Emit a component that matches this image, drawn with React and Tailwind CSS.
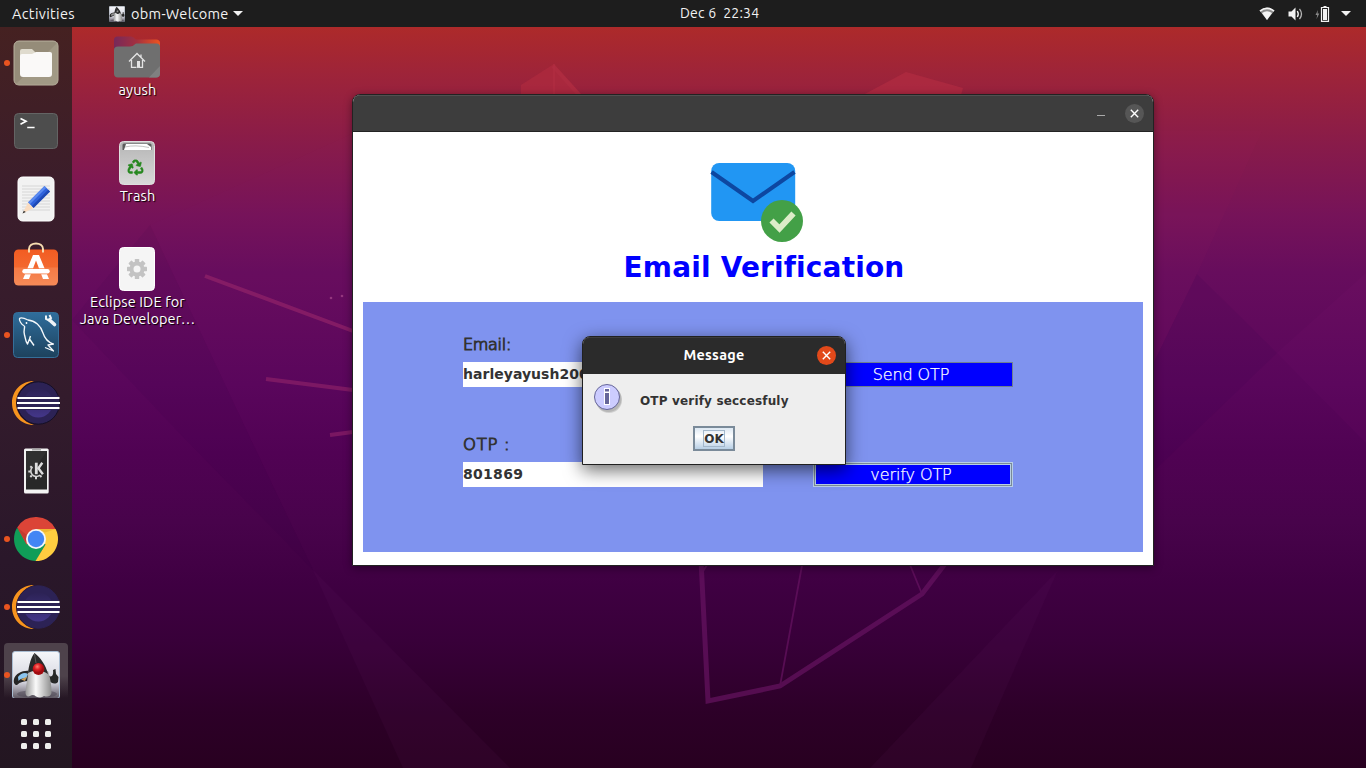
import React from "react";
import { FaRecycle } from "react-icons/fa";

const UI = "font-['Ubuntu','Noto_Sans',sans-serif]";

function Wallpaper() {
  return (
    <svg className="absolute inset-0 h-full w-full" viewBox="0 0 1366 768" aria-hidden="true">
      <defs>
        <linearGradient id="sky" x1="0" y1="0" x2="0" y2="1">
          <stop offset="0.035" stopColor="#ad2a2a" />
          <stop offset="0.096" stopColor="#9e2439" />
          <stop offset="0.19" stopColor="#881b4a" />
          <stop offset="0.28" stopColor="#761359" />
          <stop offset="0.355" stopColor="#670d5d" />
          <stop offset="0.5" stopColor="#59065b" />
          <stop offset="0.59" stopColor="#500253" />
          <stop offset="0.68" stopColor="#48034b" />
          <stop offset="0.76" stopColor="#3f0042" />
          <stop offset="0.835" stopColor="#380039" />
          <stop offset="0.927" stopColor="#2d0028" />
          <stop offset="1" stopColor="#280020" />
        </linearGradient>
      </defs>
      <rect width="1366" height="768" fill="url(#sky)" />
      <path d="M150 225 L251 440 L313 570 L186 440 L72 320Z" fill="#20004a" opacity="0.06" />
      <path d="M150 225 L360 130 V570 H313 L251 440Z" fill="#a02080" opacity="0.02" />
      <path d="M313 570 L403 768 H510Z" fill="#6a2070" opacity="0.09" />
      <path d="M1058 570 L870 768 H971Z" fill="#6a2070" opacity="0.09" />
      <path d="M1262 131 L1197 274 L1154 362 V131Z" fill="#b03060" opacity="0.05" />
      <path d="M1197 274 L1277 353 L1154 471 V362Z" fill="#28004a" opacity="0.09" />
      <path d="M1366 273 L1277 353 L1366 443Z" fill="#a02080" opacity="0.06" />
      <path d="M521 85 L554 64 L582 95 H521Z" fill="#b22c40" opacity="0.6" />
      <path d="M554 64 V95" stroke="#b63045" strokeWidth="1.5" opacity="0.6" />
      <path d="M553 66 L580 96" stroke="#b22e43" strokeWidth="4" opacity="0.5" />
      <path d="M863 95 L906 72 L963 88 L961 95Z" fill="#b52d43" opacity="0.6" />
      <g fill="none" stroke="#8f2268">
        <path d="M205 276 L353 331" strokeWidth="4" opacity="0.75" />
        <path d="M266 379 L353 390" strokeWidth="4" opacity="0.65" />
        <path d="M330 435 L353 432" strokeWidth="4" opacity="0.65" />
      </g>
      <g fill="#a84a8c" opacity="0.7">
        <circle cx="331" cy="298" r="1.3" />
        <circle cx="342" cy="296" r="1.3" />
      </g>
      <g fill="none" stroke="#6a1464" opacity="0.65">
        <path d="M701 560 L708 701 L780 686 L922 594 L948 560" strokeWidth="5" />
        <path d="M803 560 L780 686 M908 560 L922 594" strokeWidth="1.8" />
        <path d="M703 571 L709 562" strokeWidth="2" />
      </g>
    </svg>
  );
}

function FilesIcon() {
  return (
    <svg className="size-12" viewBox="0 0 48 48">
      <rect x="2" y="2" width="44" height="44" rx="5" fill="#958c79" stroke="#b9b19f" />
      <path d="M46 3 V42 Q46 46 42 46 H3Z" fill="#aaa28d" opacity="0.6" />
      <path d="M8 14 V12 Q8 10 10 10 H20 L24 14 H38 Q40 14 40 16 V25 H8Z" fill="#dfdbce" />
      <path d="M8 17 Q8 15 10 15 H20 L24 13 H38 Q40 13 40 15 V35 Q40 38 37 38 H11 Q8 38 8 35Z" fill="#faf9f8" />
    </svg>
  );
}

function TerminalIcon() {
  return (
    <svg className="size-12" viewBox="0 0 48 48">
      <rect x="2.5" y="6.5" width="43" height="35" rx="4" fill="#4d4d4d" stroke="#646464" />
      <path d="M8.5 11.5 L14 14.3 L8.5 17.2" fill="none" stroke="#fff" strokeWidth="1.7" />
      <path d="M15.2 20.5 H22.6" stroke="#fff" strokeWidth="1.5" />
    </svg>
  );
}

function EditorIcon() {
  return (
    <svg className="size-12" viewBox="0 0 48 48">
      <rect x="6" y="2" width="36" height="44" rx="4.5" fill="#f2f2f2" stroke="#fff" />
      <path d="M10 11 H38 M10 14 H38 M10 17 H38 M10 20 H38 M10 23 H38 M10 26 H38 M10 29 H38 M10 32 H38 M10 35 H38" stroke="#cfcfcf" strokeWidth="0.8" />
      <path d="M16 27.5 L32.5 11 L38 16.5 L21.5 33Z" fill="#2f62dc" />
      <path d="M16 27.5 L32.5 11 L34.3 12.8 L17.8 29.3Z" fill="#5b8bf0" />
      <path d="M19.7 31.2 L36.2 14.7 L38 16.5 L21.5 33Z" fill="#1e49b4" />
      <path d="M16 27.5 L21.5 33 L10.5 38.5Z" fill="#fadcc0" />
      <path d="M11.8 35.7 L13.8 37 L10.5 38.5Z" fill="#333" />
    </svg>
  );
}

function SoftwareIcon() {
  return (
    <svg className="size-12 overflow-visible" viewBox="0 0 48 48">
      <defs>
        <linearGradient id="bag" x1="0" y1="0" x2="0" y2="1">
          <stop stopColor="#f25c22" />
          <stop offset="0.49" stopColor="#f3682f" />
          <stop offset="0.51" stopColor="#f57a45" />
          <stop offset="1" stopColor="#f58a58" />
        </linearGradient>
      </defs>
      <rect x="2" y="6.5" width="44" height="36" rx="4.5" fill="url(#bag)" />
      <path d="M17 9.5 V6 C17 -1.5 31 -1.5 31 6 V9.5" fill="none" stroke="#f6dcb0" strokeWidth="2" />
      <path d="M21 12 H27 L37 36 H31 L24 17.5 L17 36 H11Z" fill="#fff" />
      <path d="M11 28.3 H37" stroke="#f57a45" strokeWidth="6" />
      <path d="M12.5 28.3 H35.5" stroke="#fff" strokeWidth="4.4" strokeLinecap="round" />
    </svg>
  );
}

function WorkbenchIcon() {
  return (
    <svg className="size-12" viewBox="0 0 48 48">
      <defs>
        <linearGradient id="wb" x1="0" y1="0" x2="0" y2="1">
          <stop stopColor="#2f6d9c" />
          <stop offset="1" stopColor="#1d425d" />
        </linearGradient>
      </defs>
      <rect x="1.5" y="1.5" width="45" height="45" rx="4" fill="url(#wb)" stroke="#356f99" />
      <path d="M12.5 15 C9 14 7 8.5 7.5 7.5 C9 6 14 8 16 9 C23 9.5 29 15 31 22 C32.5 27 35 31 41.5 33 L36 34 L41.5 40 L33 36.5" fill="none" stroke="#f4f8fb" strokeWidth="1.3" strokeLinejoin="round" />
      <path d="M12.5 15 C13 18 11 20 12.5 24 C13.5 27 13.5 31 15.5 33 L17.5 28 L22 34.5 M17.5 28 L18.5 25" fill="none" stroke="#f4f8fb" strokeWidth="1.4" strokeLinejoin="round" />
      <circle cx="14.5" cy="12" r="0.9" fill="#fff" />
      <path d="M37.5 9 L42.5 13.5" stroke="#eef3f7" strokeWidth="3.6" strokeLinecap="round" />
      <path d="M34 4.5 V8 L37 9.5 L39 7 L37.5 4" fill="none" stroke="#eef3f7" strokeWidth="2" />
    </svg>
  );
}

function EclipseIcon({ id, outlined }) {
  return (
    <svg className="size-12 overflow-visible" viewBox="0 0 48 48">
      <defs>
        <linearGradient id={id} x1="0" y1="0" x2="0" y2="1">
          <stop stopColor="#2c2255" />
          <stop offset="1" stopColor="#483a92" />
        </linearGradient>
      </defs>
      <path d="M22 2 C9 2 0 12 0 24 C0 36 9 46 22 46 C11 43 4 34 4 24 C4 14 11 5 22 2Z" fill="#f7941e" />
      <circle cx="26.3" cy="24" r="21.2" fill="#2c2255" stroke={outlined ? "#140f26" : "#2c2255"} strokeWidth="1" />
      <circle cx="26.3" cy="24" r="14.5" fill={`url(#${id})`} opacity="0.85" />
      <path d="M5.5 17 H47 V31 H5.5Z" fill="#2c2255" />
      <path d="M5.5 19 H47.5 M5 24 H48 M5.5 29 H47.5" stroke="#fff" strokeWidth="2" />
    </svg>
  );
}

function PhoneIcon() {
  return (
    <svg className="size-12" viewBox="0 0 48 48">
      <rect x="12" y="1.5" width="24.7" height="45" rx="1.5" fill="#f3f3f3" />
      <rect x="20" y="1.5" width="9" height="2" fill="#aaa" />
      <rect x="14" y="4" width="21" height="38.5" fill="#282828" />
      <path d="M14 4 H35 L14 34Z" fill="#363636" opacity="0.6" />
      <path d="M20.5 20 A5 5 0 1 0 28 28" fill="none" stroke="#d5d5d5" strokeWidth="1.6" />
      <path d="M19.8 20.5 L18.3 19.2 M18.3 24.5 H16.3 M19.8 28.5 L18.3 30 M24 30 V32.2 M28 28.5 L29.5 30" stroke="#d5d5d5" strokeWidth="2" />
      <path d="M24.3 15.7 V27.2" stroke="#ddd" strokeWidth="2.8" />
      <path d="M30.3 15.7 L26.4 21.3 L30.9 27.2" fill="none" stroke="#ddd" strokeWidth="2.4" />
    </svg>
  );
}

function ChromeIcon() {
  return (
    <svg className="size-12" viewBox="0 0 48 48">
      <path d="M24 24 L4.95 13 A22 22 0 0 0 24 46 L33.53 29.5Z" fill="#109d58" />
      <path d="M24 24 L24 14 H43.6 A22 22 0 0 1 23.5 46 L33.53 29.5Z" fill="#ffcd40" />
      <path d="M24 24 L14.47 29.5 L5.2 12.5 A22 22 0 0 1 43.5 14 H24Z" fill="#db4437" />
      <path d="M5.2 12.5 L14.5 28.5 L15 20Z" fill="#9c2c26" opacity="0.35" />
      <path d="M24 14 H43.6 L33 17.5Z" fill="#d99a20" opacity="0.4" />
      <circle cx="24" cy="24" r="10" fill="#f4f5f8" />
      <circle cx="24" cy="24" r="8.2" fill="#4285f4" />
    </svg>
  );
}

function DukeIcon({ className, mono }) {
  const p = mono ? "dm" : "dc";
  return (
    <svg className={className} viewBox="0 0 48 48">
      <defs>
        <linearGradient id={p + "bg"} x1="0" y1="0" x2="0" y2="1">
          <stop stopColor="#f6f7fa" />
          <stop offset="0.65" stopColor="#d5d5df" />
          <stop offset="1" stopColor="#5b545f" />
        </linearGradient>
        <linearGradient id={p + "body"} x1="0" x2="1">
          <stop stopColor="#999" />
          <stop offset="0.4" stopColor="#fafafa" />
          <stop offset="1" stopColor="#8d8d8d" />
        </linearGradient>
        <radialGradient id={p + "nose"} cx="0.4" cy="0.3">
          <stop stopColor={mono ? "#aaa" : "#ff8070"} />
          <stop offset="0.5" stopColor={mono ? "#555" : "#e02226"} />
          <stop offset="1" stopColor={mono ? "#222" : "#a00b10"} />
        </radialGradient>
      </defs>
      <rect x="0.5" y="0.5" width="47" height="47" rx="2.5" fill={`url(#${p}bg)`} stroke="#a9bdd2" />
      <ellipse cx="25" cy="43" rx="20" ry="4" fill="#4a4350" opacity="0.5" />
      <path d="M18 20 C11 19 4 22 2 28 C1 32 3 34 5 34 C8 31 12 30 17 30Z" fill="#262626" />
      <path d="M6 26 C9 22 13 21 16 23 L14 28 C10 27 8 28 6.5 30Z" fill={mono ? "#999" : "#8bc4ee"} />
      <path d="M9 28.5 L15 25.5 L13 30Z" fill={mono ? "#777" : "#c89a55"} />
      <path d="M36 24 C39 27 42 25 41 19 L43.5 18 L44 23 L46.5 26 L46 31 C43 34 39 32 36 29Z" fill="#272727" />
      <path d="M16 20 C16 28 14 33 13.5 42 Q14 46.5 18 45 Q21 43 24 45.5 Q29 47.5 32 45 Q38 47 39.5 42 C39.5 34 38.5 27 36 20Z" fill={`url(#${p}body)`} />
      <path d="M22.5 2 C28 6 34 14 36 23 C30 19 22 19 16 22 C17 14 19 6 22.5 2Z" fill="#2a2a2a" />
      <path d="M22.5 3 L24 12" stroke="#666" strokeWidth="0.8" />
      <circle cx="26.5" cy="18" r="5.9" fill={`url(#${p}nose)`} />
    </svg>
  );
}

function DockItem({ children, running }) {
  return (
    <div className="flex h-[68px] w-[72px] shrink-0 items-center">
      <div className="flex w-3 justify-center pl-0.5">
        {running && <span className="size-[6px] rounded-full bg-[#e95420]" />}
      </div>
      {children}
    </div>
  );
}

function Dock() {
  return (
    <nav className="flex w-[72px] shrink-0 flex-col bg-[linear-gradient(180deg,#452121_0%,#3b1d2b_22%,#331b2c_50%,#2a172a_72%,#231621_100%)] pt-[2px]">
      <DockItem running><FilesIcon /></DockItem>
      <DockItem><TerminalIcon /></DockItem>
      <DockItem><EditorIcon /></DockItem>
      <DockItem><SoftwareIcon /></DockItem>
      <DockItem running><WorkbenchIcon /></DockItem>
      <DockItem><EclipseIcon id="ecl1" outlined /></DockItem>
      <DockItem><PhoneIcon /></DockItem>
      <DockItem running><ChromeIcon /></DockItem>
      <DockItem running><EclipseIcon id="ecl2" /></DockItem>
      <div className="mx-1 mt-[2px] flex h-[55px] shrink-0 items-start overflow-hidden rounded-t bg-gradient-to-b from-[#4e424b] from-60% to-transparent">
        <span className="mt-[29px] size-[6px] rounded-full bg-[#e95420]" />
        <DukeIcon className="ml-[2px] mt-2 size-12" />
      </div>
      <div className="ml-[21px] mt-[21px] grid w-[30px] grid-cols-3 gap-[6px]">
        {Array.from({ length: 9 }, (_, i) => (
          <span key={i} className="size-[6px] rounded-[1.5px] bg-[#eeeeec]" />
        ))}
      </div>
    </nav>
  );
}

function TopBar() {
  return (
    <header className={`relative flex h-[27px] shrink-0 items-center bg-[#1d1d1d] text-[14.5px] text-[#f2f2f2] ${UI}`}>
      <span className="ml-3 mt-px w-[97px] tracking-[0.35px]">Activities</span>
      <DukeIcon mono className="size-4" />
      <span className="ml-[6px] mt-px w-[99px] whitespace-nowrap tracking-[0.3px]">obm-Welcome</span>
      <svg className="ml-[3px] h-[5px] w-[10px]" viewBox="0 0 10 5"><path d="M0 0 H10 L5 5Z" fill="#f2f2f2" /></svg>
      <span className="absolute left-[680px] top-0 whitespace-pre text-[14px] leading-[27px] tracking-[0.22px]">Dec 6  22:34</span>
      <div className="ml-auto mr-[15px] flex items-center">
        <svg className="h-[14px] w-4" viewBox="0 0 16 14">
          <path d="M0.5 3.5 Q8 -2.5 15.5 3.5 L8 13Z" fill="#8c8c8c" />
          <path d="M0.5 3.5 Q8 -2.5 15.5 3.5 L14.5 4.7 Q8 0 1.5 4.7Z M3 6 Q8 2.5 13 6 L8 13Z" fill="#f4f4f4" />
        </svg>
        <svg className="ml-[13px] h-[14px] w-4" viewBox="0 0 16 14">
          <path d="M0.5 4.5 H3.5 L7.5 0.5 V13.5 L3.5 9.5 H0.5Z" fill="#f2f2f2" />
          <path d="M9.3 4 Q11.2 7 9.3 10" fill="none" stroke="#f2f2f2" strokeWidth="1.4" />
          <path d="M11.5 1.8 Q15.5 7 11.5 12.2" fill="none" stroke="#b5b5b5" strokeWidth="1.3" />
        </svg>
        <svg className="ml-[11px] h-4 w-[15px]" viewBox="0 0 15 16">
          <path d="M3 4 L0.5 9 H2.2 L1.5 13 L4.3 7.5 H2.5Z" fill="#8a8a8a" />
          <path d="M6.5 1.5 H13.500 V15.300 H6.500Z M8.500 0.500 H11.500" fill="none" stroke="#f2f2f2" strokeWidth="1.2" />
          <rect x="8" y="3" width="4" height="11" fill="#f2f2f2" />
        </svg>
        <svg className="ml-[11px] h-[5px] w-[10px]" viewBox="0 0 10 5"><path d="M0 0 H10 L5 5Z" fill="#f2f2f2" /></svg>
      </div>
    </header>
  );
}

function HomeFolderIcon() {
  return (
    <svg className="h-[44px] w-[46px]" viewBox="0 0 46 44">
      <defs>
        <linearGradient id="tab"><stop stopColor="#76295a" /><stop offset="0.5" stopColor="#a4303f" /><stop offset="1" stopColor="#ee5420" /></linearGradient>
      </defs>
      <path d="M0 15 V5 Q0 1.5 3.5 1.5 H17 Q19 1.5 22 4.5 H42 Q46 4.5 46 8 V15Z" fill="url(#tab)" />
      <path d="M0 15 Q0 11.5 4 11.5 H16 Q19 11.5 22 8.500 H42.5 Q46 8.5 46 12 V38.5 Q46 42.5 42 42.5 H4 Q0 42.5 0 38.5Z" fill="#6f6f6f" />
      <path d="M46 31 L35 42.5 H42 Q46 42.5 46 38.5Z" fill="#808080" />
      <path d="M15 26.5 L23 18.5 L31 26.5 M17.5 25 V32.3 H22.5 M25.5 32.3 H28.5 V25 M27 19.5 V22" fill="none" stroke="#e4e4e4" strokeWidth="1.3" />
      <rect x="23" y="26" width="3" height="6.9" fill="#e4e4e4" />
    </svg>
  );
}

function TrashIcon() {
  return (
    <svg className="h-[44px] w-[36px]" viewBox="0 0 36 44">
      <defs>
        <linearGradient id="bin" x1="0" y1="0" x2="0" y2="1"><stop stopColor="#b5b5b5" /><stop offset="1" stopColor="#d9d9d9" /></linearGradient>
      </defs>
      <rect x="0.5" y="0.5" width="35" height="43" rx="4" fill="url(#bin)" stroke="#dfdfdf" />
      <path d="M3.5 9 V4 Q3.5 2.5 5 2.5 H31 Q32.5 2.5 32.5 4 V9Z" fill="#5c5c5c" />
      <path d="M5 9 L7 3 H28 L32 6 V9Z" fill="#fff" />
      <path d="M6 6 Q16 3.5 30 6.500" stroke="#999" strokeWidth="0.6" fill="none" />
      <FaRecycle x="8.5" y="18.500" width="19.5" height="19.5" color="#26881f" stroke="#26881f" strokeWidth="16" />
    </svg>
  );
}

function LauncherIcon() {
  return (
    <svg className="h-[44px] w-[36px]" viewBox="0 0 36 44">
      <rect x="0.5" y="0.5" width="35" height="43" rx="4" fill="#f5f5f5" stroke="#fff" />
      <g transform="translate(18 22)">
        {[0, 45, 90, 135].map((a) => (
          <rect key={a} x="-2.2" y="-10" width="4.4" height="20" rx="0.6" fill="#c3c3c3" transform={`rotate(${a})`} />
        ))}
        <circle r="7.5" fill="#c3c3c3" />
        <circle r="3.5" fill="#f5f5f5" />
      </g>
    </svg>
  );
}

function DesktopIcon({ icon, children }) {
  return (
    <div className="flex h-[106px] w-[130px] flex-col items-center">
      {icon}
      <div className={`ml-px mt-[2px] whitespace-pre text-center text-[14.5px] leading-[17px] tracking-[0.12px] text-white [text-shadow:1px_1px_1px_#000] ${UI}`}>{children}</div>
    </div>
  );
}

function CloseGlyph() {
  return (
    <svg className="size-[9px]" viewBox="0 0 9 9"><path d="M0.8 0.8 L8.2 8.2 M8.2 0.8 L0.8 8.2" stroke="#fff" strokeWidth="1.4" /></svg>
  );
}

function MailCheckIcon() {
  return (
    <svg className="h-20 w-[100px]" viewBox="0 0 100 80">
      <rect x="8.2" y="0" width="84" height="58" rx="8" fill="#2196f3" />
      <path d="M8.5 9 L50 38 L91.5 9" fill="none" stroke="#0d47a1" strokeWidth="4" />
      <circle cx="79" cy="58" r="21" fill="#43a047" />
      <path d="M68.5 57.5 L76.5 65.5 L90.5 50.5" fill="none" stroke="#dcedc8" strokeWidth="5.8" />
    </svg>
  );
}

function Field({ label, labelSpacing, value, valueSpacing, button, focused }) {
  return (
    <div className="flex h-[100px] items-start">
      <div className="w-[300px]">
        <div className={`h-[30px] whitespace-pre font-['DejaVu_Sans',sans-serif] font-extralight leading-[25px] text-[#333] [-webkit-text-stroke:1.1px_#333] ${labelSpacing}`}>{label}</div>
        <div className={`h-[25px] bg-white font-['DejaVu_Sans',sans-serif] text-[14px] font-bold leading-[24px] text-[#333] ${valueSpacing}`}>{value}</div>
      </div>
      <div className={`ml-[50px] mt-[30px] flex h-[25px] w-[200px] border ${focused ? "border-[#b8cfe5] bg-[#7a8a99] p-px" : "border-[#6f8090] bg-[#0000ff]"}`}>
        <button className={`flex-1 bg-[#0000ff] pr-1 font-['DejaVu_Sans',sans-serif] text-[16px] font-extralight tracking-[-0.1px] text-white [-webkit-text-stroke:0.25px_#fff] ${focused ? "border border-[#b8cfe5] leading-[18px]" : "leading-[22px]"}`}>{button}</button>
      </div>
    </div>
  );
}

function VerificationWindow() {
  return (
    <section className="absolute left-[280px] top-[67px] flex h-[472px] w-[802px] flex-col overflow-hidden rounded-t-[8px] border border-[#222] bg-white shadow-[0_2px_8px_rgba(0,0,0,0.4)]">
      <div className="flex h-[37px] shrink-0 items-center justify-end border-b border-[#232323] bg-[#3d3d3d] pr-[9px] shadow-[inset_0_1px_0_#505050]">
        <span className="mr-5 mt-[5px] h-px w-2 bg-[#aaa]" />
        <span className="flex size-[19px] items-center justify-center rounded-full bg-[#565656]"><CloseGlyph /></span>
      </div>
      <div className="flex flex-1 flex-col items-center pt-[31px]">
        <MailCheckIcon />
        <h1 className="ml-[22px] mt-[5px] h-[39px] whitespace-nowrap font-['DejaVu_Sans',sans-serif] text-[28px] font-bold leading-[40px] tracking-[0.15px] text-[#0000ff]">Email Verification</h1>
        <div className="mt-[15px] h-[250px] w-[780px] bg-[#7f93ef] pl-[100px] pt-[30px]">
          <Field label="Email:" labelSpacing="text-[16px] tracking-[-0.3px]" value="harleyayush2001" valueSpacing="tracking-[0.03px]" button="Send OTP" />
          <Field label="OTP :" labelSpacing="text-[16.5px] tracking-[0.7px]" value="801869" valueSpacing="tracking-[0.3px]" button="verify OTP" focused />
        </div>
      </div>
    </section>
  );
}

function InfoIcon() {
  return (
    <svg className="h-8 w-8" viewBox="0 0 32 32">
      <circle cx="17" cy="18" r="13" fill="#555" opacity="0.2" />
      <circle cx="16.5" cy="17" r="13" fill="#555" opacity="0.2" />
      <circle cx="15" cy="15" r="12.5" fill="#ccccff" stroke="#666699" />
      <path d="M12 6 H18 V23 H12Z" fill="#fff" />
      <path d="M13 7 H17 V9.5 H13Z M13 11 H17 V22 H13Z" fill="#666699" />
    </svg>
  );
}

function MessageDialog() {
  return (
    <section className="absolute left-[510px] top-[309px] flex h-[129px] w-[264px] flex-col rounded-t-[8px] border border-[#202020] bg-[#eeeeee] shadow-[0_5px_18px_rgba(0,0,0,0.6)]">
      <div className="relative flex h-[37px] shrink-0 items-center justify-center rounded-t-[7px] bg-[#2b2b2b] shadow-[inset_0_1px_0_#3c3c3c]">
        <span className={`mt-px text-[14.4px] font-bold tracking-[0.25px] text-white ${UI}`}>Message</span>
        <span className="absolute right-[9px] top-[9px] flex size-[19px] items-center justify-center rounded-full bg-[#e2491a]"><CloseGlyph /></span>
      </div>
      <div className="flex h-[52px] items-start pl-[9px] pt-[8px]">
        <InfoIcon />
        <p className="ml-[16px] mt-[9px] whitespace-nowrap font-['DejaVu_Sans',sans-serif] text-[12px] font-bold leading-[20px] tracking-[0.17px] text-[#333]">OTP verify seccesfuly</p>
      </div>
      <button className="mx-auto flex h-[25px] w-[42px] items-center justify-center border-2 border-[#7a8a99] bg-[linear-gradient(180deg,#dde8f3_0%,#ffffff_40%,#b8cfe5_100%)]">
        <span className="flex h-[17px] w-[22px] items-center justify-center border border-[#a3b8cc] font-['DejaVu_Sans',sans-serif] text-[12px] font-bold text-[#333]">OK</span>
      </button>
    </section>
  );
}

export default function App() {
  return (
    <div className="relative flex h-[768px] w-[1366px] flex-col overflow-hidden bg-[#51034f]">
      <Wallpaper />
      <TopBar />
      <div className="relative flex flex-1">
        <Dock />
        <main className="relative flex-1">
          <div className="flex flex-col pt-[8px]">
            <DesktopIcon icon={<HomeFolderIcon />}>ayush</DesktopIcon>
            <DesktopIcon icon={<TrashIcon />}>Trash</DesktopIcon>
            <DesktopIcon icon={<LauncherIcon />}>{"Eclipse IDE for\nJava Developer…"}</DesktopIcon>
          </div>
          <VerificationWindow />
          <MessageDialog />
        </main>
      </div>
    </div>
  );
}
